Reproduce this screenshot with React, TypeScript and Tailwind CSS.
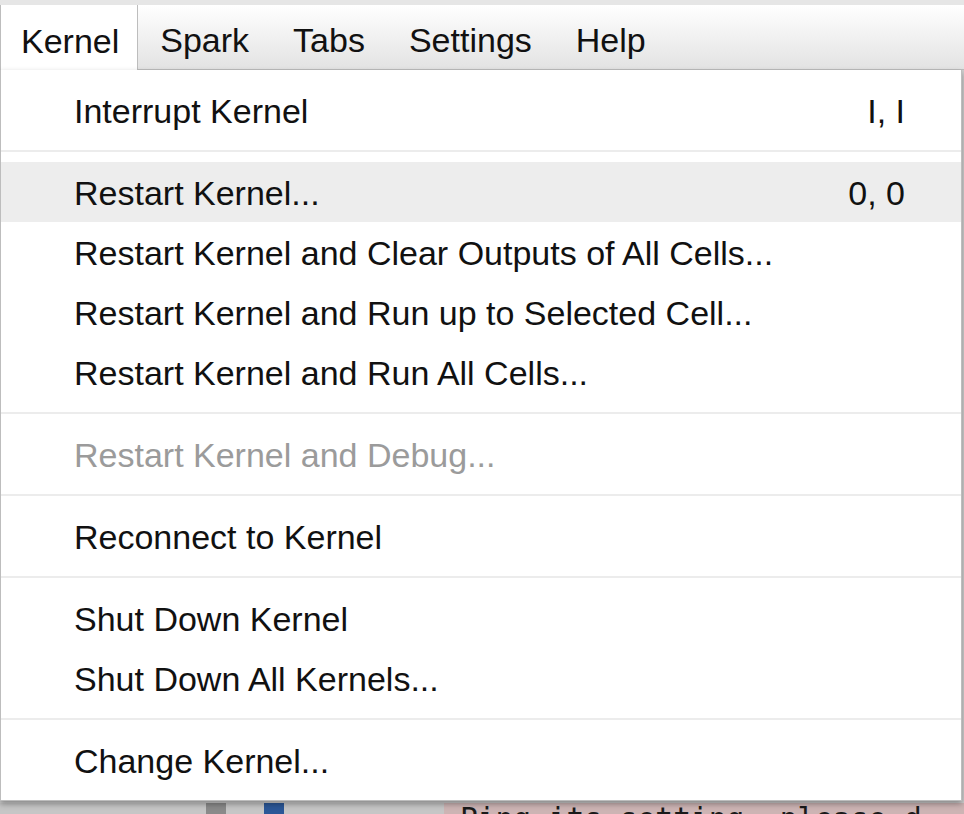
import React from 'react';

type Item = { label: string; shortcut?: string; active?: boolean; disabled?: boolean };

const groups: Item[][] = [
  [{ label: 'Interrupt Kernel', shortcut: 'I, I' }],
  [
    { label: 'Restart Kernel...', shortcut: '0, 0', active: true },
    { label: 'Restart Kernel and Clear Outputs of All Cells...' },
    { label: 'Restart Kernel and Run up to Selected Cell...' },
    { label: 'Restart Kernel and Run All Cells...' },
  ],
  [{ label: 'Restart Kernel and Debug...', disabled: true }],
  [{ label: 'Reconnect to Kernel' }],
  [{ label: 'Shut Down Kernel' }, { label: 'Shut Down All Kernels...' }],
  [{ label: 'Change Kernel...' }],
];

const tabs = ['Spark', 'Tabs', 'Settings', 'Help'];

function MenuRow({ item }: { item: Item }) {
  return (
    <div
      className={
        'flex h-[60px] items-center justify-between pl-[73px] pr-[56px] pt-[2px] ' +
        (item.active ? 'bg-[#ededed] ' : '') +
        (item.disabled ? 'text-[#9b9b9b]' : 'text-[#111]')
      }
    >
      <span>{item.label}</span>
      {item.shortcut && <span>{item.shortcut}</span>}
    </div>
  );
}

export default function App() {
  return (
    <div
      className="relative flex h-[814px] w-[964px] flex-col overflow-hidden bg-[#cfcfcf] text-[34px] leading-none"
      style={{ fontFamily: '"Liberation Sans", Arial, sans-serif' }}
    >
      {/* menu bar */}
      <div className="h-[5px] bg-[#e6e6e6]" />
      <div className="flex h-[65px] border-b border-[#bdbdbd] bg-gradient-to-b from-white to-[#e3e3e3]">
        <div className="-mb-px flex items-center border-x border-[#bdbdbd] bg-white pl-[20px] pr-[18px] pt-[6px] text-[#111]">
          Kernel
        </div>
        {tabs.map((t) => (
          <div key={t} className="flex items-center px-[22px] pt-[6px] text-[#111]">
            {t}
          </div>
        ))}
      </div>

      {/* notebook behind the menu */}
      <div className="flex flex-1 flex-col justify-end">
        <div className="flex h-[11px] bg-[#c6c6c6]">
          <div className="w-[206px]" />
          <div className="w-[20px] bg-[#8a8a8a]" />
          <div className="w-[38px]" />
          <div className="w-[20px] bg-[#2b5797]" />
          <div className="w-[160px]" />
          <div className="flex-1 overflow-hidden bg-[#cdb4b4] pl-[16px]">
            <div
              className="mt-[1px] whitespace-nowrap text-[29.5px] leading-[30px] text-[#1a1a1a]"
              style={{ fontFamily: '"DejaVu Sans Mono", monospace' }}
            >
              Ping its setting, please d
            </div>
          </div>
        </div>
      </div>

      {/* dropdown */}
      <div className="absolute left-0 top-[70px] w-[962px] border-x border-b border-[#bdbdbd] bg-white py-[10px] shadow-[0_3px_6px_rgba(0,0,0,0.35)]">
        {groups.map((g, i) => (
          <div key={i}>
            {i > 0 && <div className="my-[10px] h-[2px] bg-[#ececec]" />}
            {g.map((it) => (
              <MenuRow key={it.label} item={it} />
            ))}
          </div>
        ))}
      </div>
    </div>
  );
}
